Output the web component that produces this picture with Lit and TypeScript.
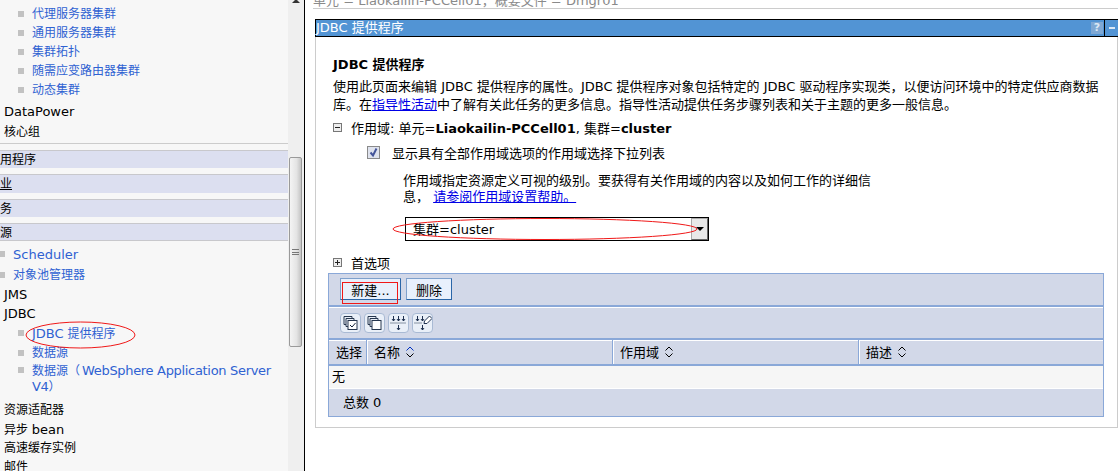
import { LitElement, html, css, svg } from "lit";
import { customElement } from "lit/decorators.js";

const sortIcon = (color = "#000") => html`<svg class="sort" width="10" height="14" viewBox="0 0 10 14" fill="none" stroke-width="1"><path d="M1.5 5.5 5 2l3.5 3.5" stroke=${color}/><path d="M1.5 8.5 5 12l3.5-3.5" stroke="#000"/></svg>`;

const tools = [
  svg`<path d="M3.500 3.500h8v2M3.500 3.500v8h2M5.500 5.500h8v2M5.500 5.500v8h2" fill="none" stroke="#26364e"/><rect x="7.500" y="7.500" width="9" height="9" fill="#fff" stroke="#26364e"/><path d="m9.500 12 2 2 3.500-4" fill="none" stroke="#14233a"/>`,
  svg`<path d="M3.500 3.500h8v2M3.500 3.500v8h2M5.500 5.500h8v2M5.500 5.500v8h2" fill="none" stroke="#26364e"/><rect x="7.500" y="7.500" width="9" height="9" fill="#fff" stroke="#26364e"/>`,
  svg`<path d="M5 3v5M3.500 6 5 8l1.500-2M10 3v5M8.500 6 10 8l1.500-2M15 3v5M13.500 6 15 8l1.500-2M10 12v5M8.500 15l1.500 2 1.500-2" fill="none" stroke="#1e3050"/><path d="M2 10h16" stroke="#26364e" stroke-dasharray="1 1"/>`,
  svg`<path d="M5 3v5M3.500 6 5 8l1.500-2M10 3v5M8.500 6 10 8l1.500-2M10 12v5M8.500 15l1.500 2 1.500-2" fill="none" stroke="#1e3050"/><path d="M2 10h7" stroke="#26364e" stroke-dasharray="1 1"/><path d="m12 8 5-5 2.500 2.500-5 5h-3z" fill="#fff" stroke="#1e3050"/>`,
];

@customElement("app-root")
export class AppRoot extends LitElement {
  static styles = css`
    :host { display: block; height: 471px; overflow: hidden; position: relative; background: #fff; color: #000;
      font-family: "DejaVu Sans", "Noto Sans CJK SC", sans-serif; font-size: 13px; }
    .page { display: flex; height: 471px; }

    .nav { width: 288px; height: 471px; overflow: hidden; flex: none; background: #f7f7f7; font-size: 12px; padding-top: 5px; box-sizing: border-box; }
    .lat { font-size: 13px; }
    .lat.tight { letter-spacing: -0.32px; margin-left: 2px; }
    .row { height: 19px; line-height: 19px; padding-left: 4px; white-space: nowrap; }
    .link { display: flex; align-items: center; padding-left: 18px; color: #2f62d2; }
    .link i { width: 6px; height: 6px; background: #c2c2c2; flex: none; margin-right: 8px; margin-top: -2px; }
    .link.shallow { padding-left: 0; }
    .link.shallow i { margin-left: -1px; }
    .wrap { height: auto; white-space: normal; line-height: 15px; align-items: flex-start; padding-right: 8px; }
    .wrap i { margin-top: 4px; }
    .m1 { margin-top: 1px; } .m2 { margin-top: 2px; } .m6 { margin-top: 6px; }
    .rule { border-top: 1px solid #ccc; margin-top: 1px; margin-bottom: 1px; }
    .band { background: #dcdff0; border-top: 1px solid #c8c8cc; height: 17px; line-height: 19px; margin-top: 6px; padding-left: 0; white-space: nowrap; }
    .band span { margin-left: -12px; display: inline-block; }
    .band.tall { height: 18px; }
    .band.last { border-bottom: 1px solid #c8c8cc; height: 16px; margin-bottom: 4px; }
    .u { text-decoration: underline; }

    .scroll { width: 16px; flex: none; background: #efefef; border-right: 1px solid #000; position: relative; display: flex; flex-direction: column; }
    .track-top { height: 157px; flex: none; }
    .thumb { width: 13px; height: 190px; margin-left: 1px; box-sizing: border-box; border: 1px solid #9a9a9a; border-radius: 2px;
      background: linear-gradient(90deg, #f4f4f4, #e4e4e4 60%, #c4c4c4); display: flex; align-items: center; justify-content: center; }
    .grip { width: 7px; height: 6px; border-top: 1px solid #777; border-bottom: 1px solid #777; position: relative; box-sizing: border-box; }
    .grip::after { content: ""; display: block; height: 1px; margin-top: 1.500px; background: #777; }
    .up { width: 0; height: 0; border: 4px solid transparent; border-bottom: 4px solid #333; border-top: 0; position: absolute; left: 4px; top: -1px; }

    .main { flex: 1; min-width: 0; }
    .crumb { height: 8px; overflow: hidden; margin-left: 8px; border-bottom: 1px solid #ccc; color: #8a8a8a; }
    .crumb div { margin-top: -8px; line-height: 18px; white-space: nowrap; }
    .panel { margin: 10px 0 0 10px; height: 409px; box-sizing: border-box; border: 1px solid #ccc; border-top: 0; }
    .title { height: 18px; box-sizing: border-box; margin-left: -1px; margin-right: -1px; background: #5294d4; border: 1px solid #000; border-right: 0; color: #fff; display: flex; align-items: center; line-height: 16px; }
    .title b { font-weight: normal; flex: 1; }
    .help { width: 12px; height: 12px; background: #7fa8d4; color: #dce8f4; font-weight: bold; font-size: 11px; line-height: 12px; text-align: center; margin-right: 1px; }
    .min { width: 13px; height: 16px; border-left: 1px solid #000; display: flex; align-items: center; justify-content: center; }
    .min::before { content: ""; width: 6px; height: 2px; background: #dce8f4; }

    .body { padding: 19px 0 0 17px; }
    .t { line-height: 18px; white-space: nowrap; }
    .h { font-weight: bold; }
    .desc { margin-top: 4px; }
    a { color: #0000e6; text-decoration: underline; }
    .scope { display: flex; align-items: center; gap: 7px; height: 18px; margin-top: 4px; white-space: nowrap; }
    .tree { width: 9px; height: 9px; box-sizing: border-box; border: 1px solid #777; background: #eee; margin-left: 0; position: relative; flex: none; margin-right: 2px; }
    .tree::before { content: ""; position: absolute; left: 1px; right: 1px; top: 3px; height: 1px; background: #222; }
    .tree.plus::after { content: ""; position: absolute; top: 1px; bottom: 1px; left: 3px; width: 1px; background: #222; }
    .check { display: flex; align-items: center; height: 18px; margin-top: 7px; padding-left: 34px; white-space: nowrap; }
    .box { width: 13px; height: 13px; box-sizing: border-box; border: 1px solid #8a8a8a; background: #dfe3ee; margin-right: 12px; display: flex; }
    .hint { margin: 12px 0 0 70px; line-height: 16px; white-space: nowrap; }
    .select { margin: 12px 0 0 72px; width: 304px; height: 24px; box-sizing: border-box; border: 1px solid #000; display: flex; align-items: center; padding-left: 7px; }
    .select span { flex: 1; padding-bottom: 2px; }
    .arrow { width: 17px; height: 22px; box-sizing: border-box; background: #e8e8e8; border: 1px solid #aaa; border-right-color: #666; border-bottom-color: #666; display: flex; align-items: center; justify-content: center; }
    .arrow::before { content: ""; border: 4px solid transparent; border-top: 4px solid #000; border-bottom: 0; }
    .pref { display: flex; align-items: center; gap: 7px; height: 18px; margin-top: 12px; white-space: nowrap; }

    .table { margin: 2px 0 0 -5px; width: 776px; box-sizing: border-box; border: 1px solid #8aa8d8; }
    .bar { background: #d2d8e8; display: flex; align-items: center; border-bottom: 2px solid #8aa8d8; box-shadow: inset 0 1px 0 #fff; }
    .bar.first { height: 31px; box-shadow: none; padding: 0 0 0 11px; gap: 5px; }
    .bar.second { height: 31px; padding-left: 11px; gap: 3px; }
    .btn { height: 22px; box-sizing: border-box; background: #e8f0fc; border: 1px solid #7ea0cc; border-right-color: #2a66a8; border-bottom-color: #2a66a8; display: flex; align-items: center; justify-content: center; margin-top: -2px; padding-top: 1px; }
    .btn.new { width: 61px; }
    .btn.del { width: 46px; }
    .tool { width: 21px; height: 20px; background: #e9eff8; border: 1px solid #a9bad4; border-radius: 4px; box-sizing: border-box; display: block; }
    .head { display: grid; grid-template-columns: 38px 246px 246px 1fr; height: 24px; background: #d2d8e8; border-bottom: 2px solid #8aa8d8; box-shadow: inset 0 1px 0 #fff; }
    .head div { display: flex; align-items: center; padding-left: 6px; padding-bottom: 1px; gap: 5px; border-left: 1px solid #fff; box-shadow: inset -1px 0 0 #8aa8d8, inset 0 1px 0 #fff; }
    .head div:first-child { border-left: 0; padding-left: 7px; }
    .head div:last-child { box-shadow: inset 0 1px 0 #fff; }
    .sort { flex: none; }
    .none { height: 22px; line-height: 22px; background: #f6f6f6; padding-left: 3px; border-bottom: 1px solid #fff; }
    .total { height: 27px; line-height: 27px; background: #d2d8e8; padding-left: 14px; }
    .total span { margin-left: 4px; }

    .anno { position: absolute; left: 0; top: 0; pointer-events: none; }
  `;

  render() {
    return html`
      <div class="page">
        <nav class="nav">
          <div class="row link"><i></i>代理服务器集群</div>
          <div class="row link"><i></i>通用服务器集群</div>
          <div class="row link"><i></i>集群拓扑</div>
          <div class="row link"><i></i>随需应变路由器集群</div>
          <div class="row link"><i></i>动态集群</div>
          <div class="row m2"><span class="lat">DataPower</span></div>
          <div class="row m2">核心组</div>
          <div class="rule"></div>
          <div class="band m6"><span>应用程序</span></div>
          <div class="band tall"><span class="u">作业</span></div>
          <div class="band"><span>服务</span></div>
          <div class="band last"><span>资源</span></div>
          <div class="row link shallow"><i></i><span class="lat">Scheduler</span></div>
          <div class="row link shallow m2"><i></i>对象池管理器</div>
          <div class="row"><span class="lat">JMS</span></div>
          <div class="row"><span class="lat">JDBC</span></div>
          <div class="row link m1"><i></i><span><span class="lat">JDBC</span> 提供程序</span></div>
          <div class="row link m1"><i></i>数据源</div>
          <div class="row link wrap"><i></i><span>数据源（<span class="lat tight">WebSphere Application Server V4</span>）</span></div>
          <div class="row m6">资源适配器</div>
          <div class="row">异步 <span class="lat">bean</span></div>
          <div class="row">高速缓存实例</div>
          <div class="row">邮件</div>
        </nav>
        <div class="scroll">
          <span class="up"></span>
          <div class="track-top"></div>
          <div class="thumb"><div class="grip"></div></div>
        </div>
        <main class="main">
          <div class="crumb"><div>单元 = Liaokailin-PCCell01，概要文件 = Dmgr01</div></div>
          <section class="panel">
            <div class="title"><b>JDBC 提供程序</b><span class="help">?</span><span class="min"></span></div>
            <div class="body">
              <div class="t h">JDBC 提供程序</div>
              <div class="t desc">使用此页面来编辑 JDBC 提供程序的属性。JDBC 提供程序对象包括特定的 JDBC 驱动程序实现类，以便访问环境中的特定供应商数据<br />库。在<a href="#">指导性活动</a>中了解有关此任务的更多信息。指导性活动提供任务步骤列表和关于主题的更多一般信息。</div>
              <div class="scope"><span class="tree"></span><span>作用域: 单元=<b>Liaokailin-PCCell01</b>, 集群=<b>cluster</b></span></div>
              <div class="check"><span class="box"><svg width="11" height="11" viewBox="0 0 11 11" fill="none"><path d="m2.500 5.500 2.500 3 3.500-7" stroke="#44559a" stroke-width="2"/></svg></span>显示具有全部作用域选项的作用域选择下拉列表</div>
              <div class="hint">作用域指定资源定义可视的级别。要获得有关作用域的内容以及如何工作的详细信<br />息， <a href="#">请参阅作用域设置帮助。</a></div>
              <div class="select"><span>集群=cluster</span><div class="arrow"></div></div>
              <div class="pref"><span class="tree plus"></span><span>首选项</span></div>
              <div class="table">
                <div class="bar first"><div class="btn new">新建...</div><div class="btn del">删除</div></div>
                <div class="bar second">${tools.map((p) => html`<svg class="tool" viewBox="1 1 18 18">${p}</svg>`)}</div>
                <div class="head">
                  <div>选择</div>
                  <div>名称 ${sortIcon("#0030c0")}</div>
                  <div>作用域 ${sortIcon()}</div>
                  <div>描述 ${sortIcon()}</div>
                </div>
                <div class="none">无</div>
                <div class="total">总数<span>0</span></div>
              </div>
            </div>
          </section>
        </main>
      </div>
      <svg class="anno" width="1118" height="471" fill="none" stroke="#f01818" stroke-width="1">
        <ellipse cx="80.500" cy="335" rx="54.500" ry="13"/>
        <ellipse cx="545" cy="229" rx="152" ry="10.500"/>
        <rect x="342.500" y="282.500" width="55" height="21"/>
      </svg>
    `;
  }
}
